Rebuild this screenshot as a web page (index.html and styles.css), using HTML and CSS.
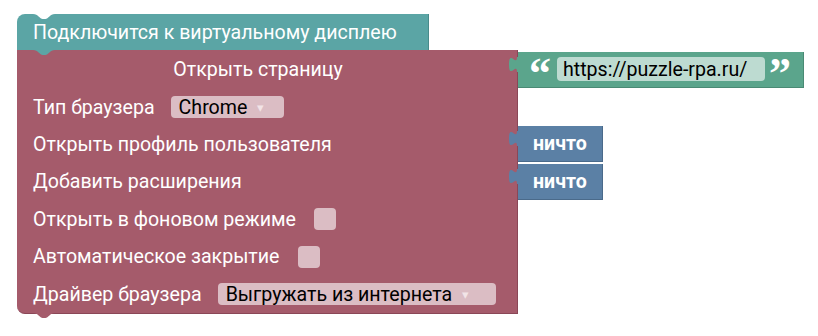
FILE: index.html
```html
<!DOCTYPE html>
<html lang="ru">
<head>
<meta charset="utf-8">
<link rel="stylesheet" href="styles.css">
</head>
<body>
<div class="workspace">
  <div class="stack">
    <div class="block teal">
      <svg class="notch-top" width="22" height="6" viewBox="0 0 22 6"><path d="M0 0 C3 0 4 1 5 2 L8 4.5 C9 5 10 5 11 5 C12 5 13 5 14 4.5 L17 2 C18 1 19 0 22 0 Z" fill="#ffffff"/></svg>
      <span class="label">Подключится к виртуальному дисплею</span>
      <svg class="tab-bottom" width="22" height="6" viewBox="0 0 22 6"><path d="M0 0 C3 0 4 1 5 2 L8 4.5 C9 5 10 5 11 5 C12 5 13 5 14 4.5 L17 2 C18 1 19 0 22 0 Z" fill="#5ba5a5"/></svg>
    </div>
    <div class="block pink">
      <div class="row">
        <span class="label title">Открыть страницу</span>
        <div class="attached string">
          <svg class="puzzle" width="9" height="16" viewBox="0 0 9 16"><path d="M9 0 L8 0 C8 10 0 -8 0 7.5 S8 5 8 15 L9 15 Z" fill="#5ba58c"/></svg>
          <span class="quote">“</span>
          <span class="field url">https://puzzle-rpa.ru/</span>
          <span class="quote">”</span>
        </div>
      </div>
      <div class="row">
        <span class="label">Тип браузера</span>
        <span class="field dropdown chrome">Chrome<span class="arrow">▾</span></span>
      </div>
      <div class="row">
        <span class="label">Открыть профиль пользователя</span>
        <div class="attached nothing">
          <svg class="puzzle" width="9" height="16" viewBox="0 0 9 16"><path d="M9 0 L8 0 C8 10 0 -8 0 7.5 S8 5 8 15 L9 15 Z" fill="#5b80a5"/></svg>
          <span>ничто</span>
        </div>
      </div>
      <div class="row">
        <span class="label">Добавить расширения</span>
        <div class="attached nothing">
          <svg class="puzzle" width="9" height="16" viewBox="0 0 9 16"><path d="M9 0 L8 0 C8 10 0 -8 0 7.5 S8 5 8 15 L9 15 Z" fill="#5b80a5"/></svg>
          <span>ничто</span>
        </div>
      </div>
      <div class="row">
        <span class="label">Открыть в фоновом режиме</span>
        <span class="checkbox"></span>
      </div>
      <div class="row">
        <span class="label">Автоматическое закрытие</span>
        <span class="checkbox"></span>
      </div>
      <div class="row">
        <span class="label">Драйвер браузера</span>
        <span class="field dropdown driver">Выгружать из интернета<span class="arrow">▾</span></span>
      </div>
      <svg class="tab-bottom" width="22" height="6" viewBox="0 0 22 6"><path d="M0 0 C3 0 4 1 5 2 L8 4.5 C9 5 10 5 11 5 C12 5 13 5 14 4.5 L17 2 C18 1 19 0 22 0 Z" fill="#a55b6b"/></svg>
    </div>
  </div>
</div>
</body>
</html>
```
FILE: styles.css
```css
html, body {
  margin: 0;
  padding: 0;
  background: #ffffff;
}
body {
  width: 818px;
  height: 336px;
  overflow: hidden;
  font-family: Roboto, "Noto Sans", sans-serif;
  font-size: 19.6px;
  color: #ffffff;
}
.workspace {
  padding: 14px 0 0 17px;
}
.stack {
  display: flex;
  flex-direction: column;
  align-items: flex-start;
}
.block {
  position: relative;
  box-sizing: border-box;
}
.teal {
  width: 412px;
  height: 36px;
  background: #5ba5a5;
  border-top-left-radius: 8px;
  display: flex;
  align-items: center;
  padding-left: 16px;
  border-right: 1px solid #4a8b8b;
  z-index: 2;
}
.notch-top {
  position: absolute;
  left: 16px;
  top: 0;
}
.tab-bottom {
  position: absolute;
  left: 16px;
  top: 100%;
  overflow: visible;
}
.pink {
  width: 501px;
  background: #a55b6b;
  border-bottom-left-radius: 8px;
  padding-top: 1px;
  display: flex;
  flex-direction: column;
  border-right: 1px solid #8a4757;
  border-bottom: 1px solid #8a4757;
}
.row {
  height: 37.4px;
  display: flex;
  align-items: center;
  padding-left: 16px;
}
.label {
  white-space: nowrap;
}
.title {
  flex: 1;
  text-align: center;
  padding-right: 35px;
}
.attached {
  position: relative;
  margin-left: auto;
  height: 36px;
  box-sizing: border-box;
  display: flex;
  align-items: center;
}
.puzzle {
  position: absolute;
  left: -9px;
  top: 5px;
  overflow: visible;
}
.string {
  width: 286px;
  margin-right: -287px;
  background: #5ba58c;
  border-bottom: 1px solid #4a8a74;
  border-right: 1px solid #4a8a74;
  padding-left: 14px;
}
.quote {
  width: 16px;
  display: flex;
  justify-content: center;
  font-family: "Liberation Serif", serif;
  font-weight: bold;
  font-size: 44px;
  line-height: 44px;
  height: 44px;
  margin-top: 10px;
  color: #ffffff;
}
.url {
  margin: 0 7px 0 9px;
  background: #bddbd1;
  color: #000000;
  height: 24px;
  width: 208px;
  padding-left: 6px;
}
.field {
  box-sizing: border-box;
  display: flex;
  align-items: center;
  border-radius: 4px;
  white-space: nowrap;
}
.dropdown {
  background: #dbbdc4;
  color: #000000;
  height: 22px;
  padding-left: 8px;
  margin-left: 16px;
}
.chrome {
  width: 113px;
}
.driver {
  width: 278px;
}
.arrow {
  color: #f2e4e7;
  font-size: 13px;
  margin-left: 10px;
}
.nothing {
  width: 85px;
  margin-right: -86px;
  background: #5b80a5;
  border-bottom: 1px solid #4a6a8a;
  border-right: 1px solid #4a6a8a;
  padding-left: 15px;
  font-weight: bold;
}
.checkbox {
  width: 22px;
  height: 22px;
  border-radius: 4px;
  background: #dbbdc4;
  margin-left: 18px;
}
```
